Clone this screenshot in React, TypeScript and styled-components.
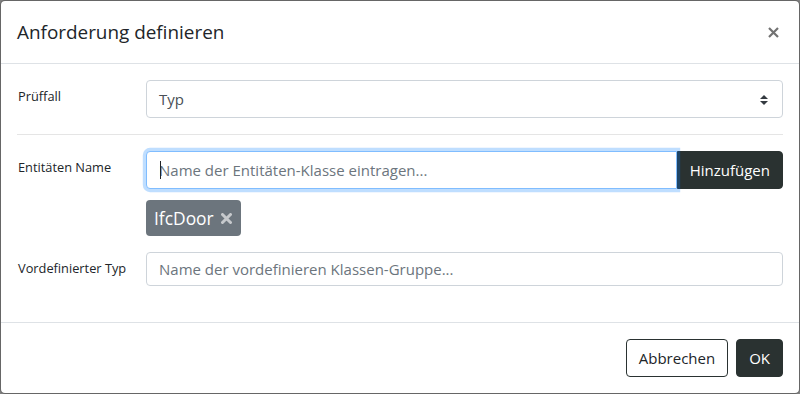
import React from "react";
import styled, { createGlobalStyle } from "styled-components";

const Global = createGlobalStyle`
  html, body { margin: 0; padding: 0; background: #808080; }
  body { font-family: "Open Sans", "Noto Sans", sans-serif; color: #212529; }
  * { box-sizing: border-box; }
`;

const Modal = styled.div`
  width: 800px;
  height: 394px;
  background: #fff;
  background-clip: padding-box;
  border: 1px solid rgba(0, 0, 0, 0.2);
  border-radius: 5px;
  display: flex;
  flex-direction: column;
  overflow: hidden;
`;

const Header = styled.div`
  display: flex;
  align-items: center;
  justify-content: space-between;
  padding: 16px;
  border-bottom: 1px solid #dee2e6;
`;

const Title = styled.h5`
  margin: 0;
  font-size: 18.9px;
  font-weight: 400;
  line-height: 30px;
  color: #212529;
`;

const CloseButton = styled.button`
  border: 0;
  background: transparent;
  padding: 0;
  margin-right: 4px;
  width: 12px;
  height: 12px;
  display: flex;
  align-items: center;
  justify-content: center;
  color: #000;
  opacity: 0.55;
  cursor: pointer;
`;

const Body = styled.div`
  padding: 16px;
  flex: 1;
`;

const FormRow = styled.div<{ $mb?: number }>`
  display: grid;
  grid-template-columns: 129px 1fr;
  margin-bottom: ${(p) => (p.$mb ?? 16)}px;
`;

const Label = styled.label`
  font-size: 12.8px;
  line-height: 19.5px;
  padding-top: 7px;
  padding-left: 1px;
  color: #212529;
`;

const Field = styled.div`
  display: flex;
  flex-direction: column;
  min-width: 0;
`;

const SelectBox = styled.div`
  position: relative;
  height: 38px;
  border: 1px solid #ced4da;
  border-radius: 4px;
  display: flex;
  align-items: center;
  padding: 0 12px;
  font-size: 15px;
  color: #495057;
`;

const SelectArrows = styled.svg`
  position: absolute;
  right: 14px;
  top: 14px;
`;

const Divider = styled.hr`
  border: 0;
  border-top: 1px solid rgba(0, 0, 0, 0.1);
  margin: 16px 0;
`;

const InputGroup = styled.div`
  display: flex;
  height: 38px;
`;

const InputWrap = styled.div`
  position: relative;
  flex: 1;
  display: flex;
  z-index: 2;
`;

const TextInput = styled.input<{ $focused?: boolean; $grouped?: boolean }>`
  flex: 1;
  width: 100%;
  height: 38px;
  padding: 6px 12px;
  font-family: inherit;
  font-size: 15px;
  color: #495057;
  background: #fff;
  border: 1px solid ${(p) => (p.$focused ? "#80bdff" : "#ced4da")};
  border-radius: ${(p) => (p.$grouped ? "4px 0 0 4px" : "4px")};
  box-shadow: ${(p) => (p.$focused ? "0 0 0 3.2px rgba(0, 123, 255, 0.25)" : "none")};
  outline: none;
  &::placeholder { color: #6c757d; opacity: 1; }
`;

const Caret = styled.span`
  position: absolute;
  left: 14px;
  top: 10px;
  width: 1px;
  height: 18px;
  background: #212529;
`;

const DarkButton = styled.button<{ $group?: boolean }>`
  font-family: inherit;
  font-size: 15px;
  line-height: 24px;
  height: 38px;
  padding: 6px 12px;
  color: #fff;
  background: #2a3231;
  border: 1px solid #2a3231;
  border-radius: ${(p) => (p.$group ? "0 4px 4px 0" : "4px")};
  cursor: pointer;
`;

const OutlineButton = styled.button`
  font-family: inherit;
  font-size: 15px;
  line-height: 24px;
  height: 38px;
  padding: 6px 12px;
  color: #212529;
  background: #fff;
  border: 1px solid #2a3231;
  border-radius: 4px;
  cursor: pointer;
`;

const Tags = styled.div`
  display: flex;
  gap: 6px;
  margin-top: 11px;
`;

const Tag = styled.span`
  display: inline-flex;
  align-items: center;
  gap: 7px;
  height: 36px;
  padding: 0 9px 0 8px;
  background: #6c757d;
  color: #fff;
  border-radius: 4px;
  font-size: 17.4px;
`;

const TagRemove = styled.svg`
  color: #c6c9cc;
`;

const Footer = styled.div`
  display: flex;
  justify-content: flex-end;
  align-items: center;
  gap: 8px;
  padding: 16px;
  border-top: 1px solid #dee2e6;
`;

export default function App() {
  return (
    <>
      <Global />
      <Modal>
        <Header>
          <Title>Anforderung definieren</Title>
          <CloseButton aria-label="Close">
            <svg width="11" height="11" viewBox="0 0 11 11">
              <path d="M1 1L10 10M10 1L1 10" stroke="currentColor" strokeWidth="2.2" />
            </svg>
          </CloseButton>
        </Header>
        <Body>
          <FormRow $mb={0}>
            <Label>Prüffall</Label>
            <Field>
              <SelectBox>
                Typ
                <SelectArrows width="8" height="10" viewBox="0 0 4 5">
                  <path d="M2 0L0 2h4zm0 5L0 3h4z" fill="#343a40" />
                </SelectArrows>
              </SelectBox>
            </Field>
          </FormRow>
          <Divider />
          <FormRow>
            <Label>Entitäten Name</Label>
            <Field>
              <InputGroup>
                <InputWrap>
                  <TextInput $focused $grouped placeholder="Name der Entitäten-Klasse eintragen..." />
                  <Caret />
                </InputWrap>
                <DarkButton $group>Hinzufügen</DarkButton>
              </InputGroup>
              <Tags>
                <Tag>
                  IfcDoor
                  <TagRemove width="11" height="11" viewBox="0 0 11 11">
                    <path d="M1.5 1.5L9.5 9.5M9.5 1.5L1.5 9.5" stroke="currentColor" strokeWidth="3" strokeLinecap="round" />
                  </TagRemove>
                </Tag>
              </Tags>
            </Field>
          </FormRow>
          <FormRow>
            <Label>Vordefinierter Typ</Label>
            <Field>
              <TextInput placeholder="Name der vordefinieren Klassen-Gruppe..." />
            </Field>
          </FormRow>
        </Body>
        <Footer>
          <OutlineButton>Abbrechen</OutlineButton>
          <DarkButton>OK</DarkButton>
        </Footer>
      </Modal>
    </>
  );
}
